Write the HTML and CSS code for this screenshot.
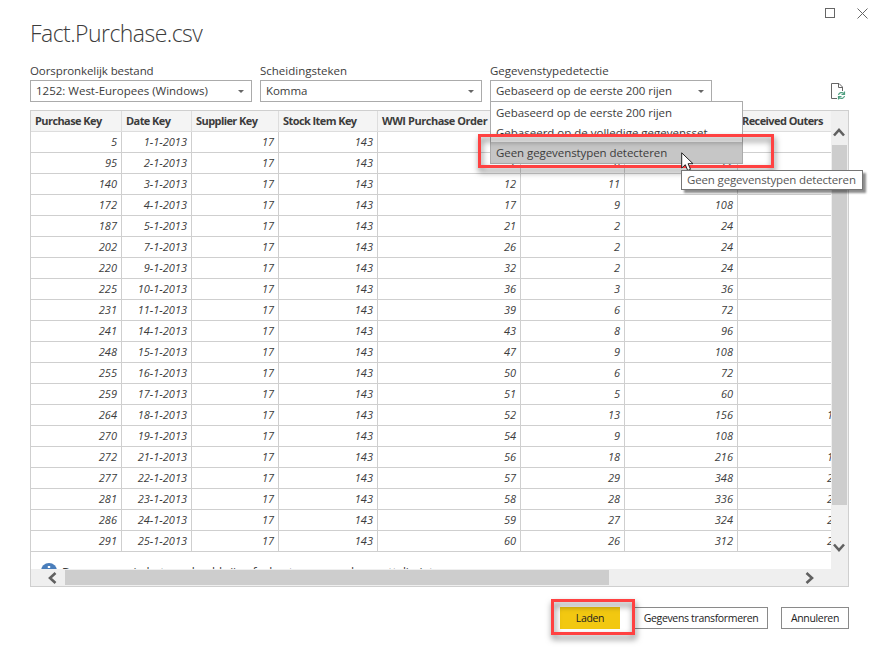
FILE: index.html
```html
<!DOCTYPE html>
<html lang="nl">
<head>
<meta charset="utf-8">
<title>Fact.Purchase.csv</title>
<link rel="stylesheet" href="styles.css">
</head>
<body>
<main class="dialog">
  <div class="window-controls">
    <svg width="11" height="11" viewBox="0 0 11 11"><rect x=".5" y=".5" width="9" height="9"/></svg>
    <svg width="11" height="11" viewBox="0 0 11 11"><path d="M.5 .5l10 10M10.5 .5l-10 10"/></svg>
  </div>
  <h1>Fact.Purchase.csv</h1>
  <section class="options">
    <div class="field">
      <label class="source">Oorspronkelijk bestand</label>
      <div class="select"><span class="encoding">1252: West-Europees (Windows)</span><i class="caret"></i></div>
    </div>
    <div class="field">
      <label>Scheidingsteken</label>
      <div class="select"><span>Komma</span><i class="caret"></i></div>
    </div>
    <div class="field">
      <label>Gegevenstypedetectie</label>
      <div class="select"><span>Gebaseerd op de eerste 200 rijen</span><i class="caret"></i></div>
      <div class="menu">
        <div class="item">Gebaseerd op de eerste 200 rijen</div>
        <div class="item cut">Gebaseerd op de volledige gegevensset</div>
        <div class="item active">Geen gegevenstypen detecteren</div>
      </div>
    </div>
    <svg class="refresh" width="15" height="18" viewBox="0 0 15 18">
      <path class="page" d="M6 15.5H.5V.5H8L11.500 4V8M7.500 .5V4.500H11.500"/>
      <path class="sync" d="M7.500 12C8 9.500 11 8.800 13 10.500M13.500 8.500V11.500H10.500M13.500 13C13 15.500 10 16.200 8 14.500M7.500 16.500V13.500H10.500"/>
    </svg>
  </section>

  <section class="preview">
    <div class="viewport">
      <table>
        <colgroup><col class="c1"><col class="c2"><col class="c3"><col class="c4"><col class="c5"><col class="c6"><col class="c7"><col class="c8"></colgroup>
        <thead><tr><th>Purchase Key</th><th>Date Key</th><th>Supplier Key</th><th>Stock Item Key</th><th>WWI Purchase Order</th><th></th><th></th><th>Received Outers</th></tr></thead>
        <tbody id="rows"></tbody>
      </table>
      <div class="note">
        <svg width="16" height="16" viewBox="0 0 16 16"><circle cx="8" cy="8" r="8" fill="#4a7ebb"/><path d="M8 3v2M8 6.500v6" stroke="#fff" stroke-width="2.400"/></svg>
        <span>De gegevens in het voorbeeld zijn afgekapt vanwege de groottelimiet.</span>
      </div>
    </div>
    <div class="vbar">
      <svg class="up" width="12" height="9" viewBox="0 0 12 9"><path d="M1 7.500L6 2l5 5.500"/></svg>
      <div class="vthumb"></div>
      <svg class="down" width="12" height="9" viewBox="0 0 12 9"><path d="M1 1.500L6 7l5-5.500"/></svg>
    </div>
    <div class="hbar">
      <svg class="left" width="9" height="12" viewBox="0 0 9 12"><path d="M7.500 1L2 6l5.500 5"/></svg>
      <div class="hthumb"></div>
      <svg class="right" width="9" height="12" viewBox="0 0 9 12"><path d="M1.500 1L7 6l-5.500 5"/></svg>
    </div>
  </section>

  <footer>
    <button class="primary">Laden</button>
    <button class="transform">Gegevens transformeren</button>
    <button class="cancel">Annuleren</button>
  </footer>

  <div class="mark mark-option"></div>
  <div class="mark mark-load"></div>
  <svg class="cursor" width="13" height="20" viewBox="0 0 13 20"><path d="M.7 .8V16L4.300 12.700L6.700 18.500L9.500 17.300L7.100 11.700H12z"/></svg>
  <div class="tooltip">Geen gegevenstypen detecteren</div>
</main>
<script src="rows.js"></script>
</body>
</html>
```
FILE: rows.js
```js
const rows = [
  [5, '1-1-2013', '', '', '', ''],
  [95, '2-1-2013', 7, 6, 72, ''],
  [140, '3-1-2013', 12, 11, '', ''],
  [172, '4-1-2013', 17, 9, 108, ''],
  [187, '5-1-2013', 21, 2, 24, ''],
  [202, '7-1-2013', 26, 2, 24, ''],
  [220, '9-1-2013', 32, 2, 24, ''],
  [225, '10-1-2013', 36, 3, 36, ''],
  [231, '11-1-2013', 39, 6, 72, ''],
  [241, '14-1-2013', 43, 8, 96, ''],
  [248, '15-1-2013', 47, 9, 108, ''],
  [255, '16-1-2013', 50, 6, 72, ''],
  [259, '17-1-2013', 51, 5, 60, ''],
  [264, '18-1-2013', 52, 13, 156, 1],
  [270, '19-1-2013', 54, 9, 108, ''],
  [272, '21-1-2013', 56, 18, 216, 1],
  [277, '22-1-2013', 57, 29, 348, 2],
  [281, '23-1-2013', 58, 28, 336, 2],
  [286, '24-1-2013', 59, 27, 324, 2],
  [291, '25-1-2013', 60, 26, 312, 2]
];
document.getElementById('rows').innerHTML = rows.map(([key, date, ...rest]) =>
  '<tr>' + [key, date, 17, 143, ...rest].map(v => `<td>${v}</td>`).join('') + '</tr>'
).join('');
```
FILE: styles.css
```css
* { box-sizing: border-box; }
body {
  margin: 0;
  background: #fff;
  color: #3c3c3c;
  font: 11.5px/20px "Open Sans", "Noto Sans", sans-serif;
  letter-spacing: -0.07px;
}
.dialog { position: relative; width: 879px; height: 659px; padding: 8px 30px 0; overflow: hidden; }
.window-controls { display: flex; justify-content: flex-end; gap: 21px; height: 11px; margin-right: -19px; }
.window-controls svg { fill: none; stroke: #666; }
h1 {
  margin: 0;
  height: 42px;
  font-size: 23px;
  font-weight: 300;
  line-height: 29px;
  letter-spacing: -0.55px;
}
.options { display: flex; gap: 8px; height: 49px; }
.field { position: relative; width: 222px; }
label { display: block; height: 19px; line-height: 20px; letter-spacing: 0; white-space: nowrap; }
.source { letter-spacing: -0.09px; }
.encoding { letter-spacing: 0; }
.select {
  display: flex;
  justify-content: space-between;
  align-items: center;
  height: 22px;
  padding: 0 7px 0 5px;
  border: 1px solid #ababab;
  background: #fff;
  white-space: nowrap;
}
.caret { border: 3px solid transparent; border-top-color: #666; border-bottom: 0; }
.menu {
  position: absolute;
  z-index: 2;
  top: 40px;
  left: 0;
  width: 253px;
  height: 63px;
  border: 1px solid #ababab;
  background: #fff;
}
.item { height: 21px; padding-left: 5px; line-height: 21px; white-space: nowrap; }
.item.cut { height: 14px; margin-bottom: 5px; line-height: 19px; letter-spacing: 0; overflow: hidden; }
.item.active { background: #c6c6c6; }
.refresh { margin: 22px 0 0 111px; fill: none; }
.page { stroke: #666; }
.sync { stroke: #4f9f80; stroke-width: 1.2; }

.preview {
  display: grid;
  grid-template: 458px 17px / 800px 17px;
  width: 819px;
  height: 477px;
  border: 1px solid #cfcfcf;
  background: #efefef;
}
.viewport { overflow: hidden; background: #fff; }
table { width: 844px; table-layout: fixed; border-collapse: separate; border-spacing: 0; letter-spacing: 0; }
.c1 { width: 91px; }
.c2 { width: 70px; }
.c3 { width: 87px; }
.c4 { width: 99px; }
.c5 { width: 143px; }
.c6 { width: 104px; }
.c7 { width: 113px; }
.c8 { width: 137px; }
th, td {
  height: 21px;
  padding: 0 4px;
  border-right: 1px solid #cfcfcf;
  border-bottom: 1px solid #cfcfcf;
  line-height: 20px;
  white-space: nowrap;
}
th { background: #f4f4f4; font-size: 11px; text-align: left; letter-spacing: -0.58px; border-color: #ddd; }
th:nth-child(5) { letter-spacing: -0.46px; }
td { font-size: 11px; font-style: italic; text-align: right; }
td:last-child { padding-right: 37px; text-align: left; padding-left: 89px; }
.note { display: flex; gap: 5px; padding: 11px 0 0 10px; font-size: 12px; line-height: 20px; letter-spacing: -0.2px; white-space: nowrap; }
.vbar, .hbar { display: flex; }
.vbar { flex-direction: column; align-items: center; padding-top: 17px; }
.vbar svg, .hbar svg { flex: none; fill: none; stroke: #606060; stroke-width: 2.6; }
.vbar svg { margin-right: 1px; }
.vthumb { width: 15px; height: 360px; margin: 8px 0 38px; background: #cdcdcd; }
.hbar { grid-column: 1 / 3; align-items: center; padding-left: 17px; }
.hthumb { width: 544px; height: 15px; margin: 0 196px 0 8px; background: #cdcdcd; }

footer { display: flex; height: 22px; margin-top: 20px; padding-left: 530px; }
button {
  height: 22px;
  padding: 0;
  border: 1px solid #8a8a8a;
  background: #fff;
  color: #222;
  font: 10.5px/20px "Open Sans", "Noto Sans", sans-serif;
  letter-spacing: -0.34px;
  white-space: nowrap;
}
.primary { width: 60px; border: 0; background: #f2c811; }
.transform { width: 134px; margin: 0 13px 0 14px; }
.cancel { width: 68px; }
.mark { position: absolute; z-index: 3; border: 3px solid #ff4141; filter: drop-shadow(1px 4px 3px rgba(0, 0, 0, .55)); }
.mark-option { left: 478px; top: 134px; width: 296px; height: 34px; }
.mark-load { left: 551px; top: 599px; width: 84px; height: 36px; }
.cursor { position: absolute; z-index: 4; left: 681px; top: 152px; fill: #fff; stroke: #222; }
.tooltip {
  position: absolute;
  z-index: 5;
  left: 681px;
  top: 170px;
  width: 182px;
  height: 20px;
  padding-left: 5px;
  border: 1px solid #767676;
  background: #fff;
  box-shadow: 3px 3px 2px rgba(0, 0, 0, .45);
  color: #575757;
  letter-spacing: -0.15px;
  line-height: 18px;
  white-space: nowrap;
}
```
